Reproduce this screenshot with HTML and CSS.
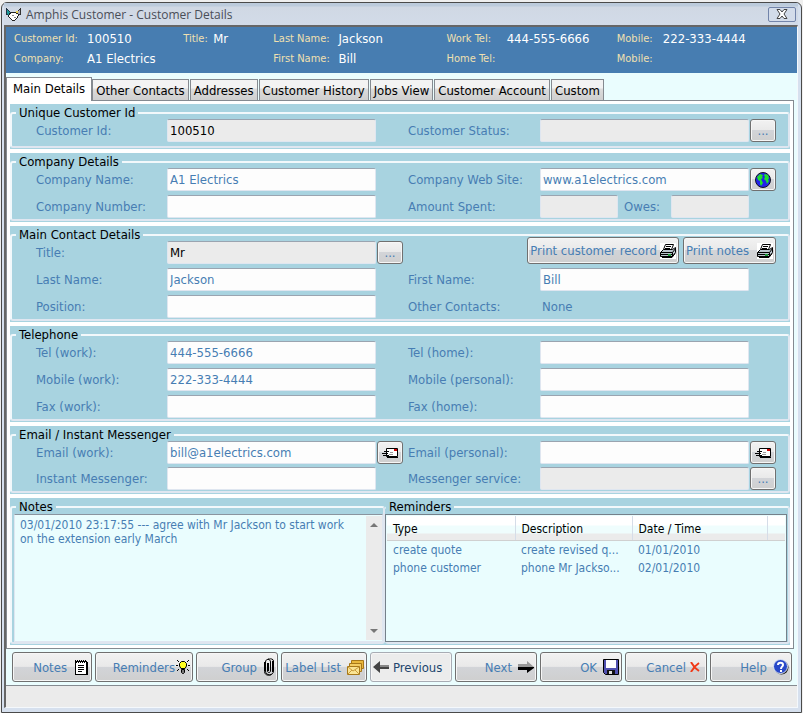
FILE: index.html
```html
<!DOCTYPE html>
<html lang="en">

<head>
    <meta charset="UTF-8">
    <meta name="viewport" content="width=device-width, initial-scale=1.0">
    <title>Amphis Customer - Customer Details</title>
    <link rel="stylesheet" href="styles.css">
</head>

<body>

    <!-- shared icons -->
    <svg class="sprite" aria-hidden="true">
        <symbol id="printer" viewBox="0 0 16 16">
            <path fill="#fff" d="M0 0h16v16H0z" />
            <path fill="#fff" stroke="#000" d="M3.5 6.5l2-5h8l-2 5z" />
            <path stroke="#000" d="M6 3.5h5M5 5.5h5" />
            <path fill="#b9c4cc" stroke="#000" d="M.5 9.5l3-3h9l3-2v5l-3 4h-12z" />
            <path fill="none" stroke="#000" d="M.5 9.5h12l3-4M12.5 9.5v4M1 11.5h11M2 14.5h10l3-4" />
            <path fill="#1d9a3b" d="M8 11h3v2H8z" />
        </symbol>
        <symbol id="mail" viewBox="0 0 16 12">
            <path fill="#fff" stroke="#000" d="M4.5 1.5h11v8h-11z" />
            <path stroke="#000" d="M2 4.5h5M0 6.5h6M1 8.5h6M5 10.5h11" />
            <path stroke="#999" d="M8 5.5h3M7 7.5h4" />
            <path fill="#c00" d="M12 2h3v2h-3z" />
        </symbol>
    </svg>

    <div class="window">
        <div class="titlebar">
            <svg class="logo" width="17" height="14" viewBox="0 0 17 14" shape-rendering="crispEdges">
                <path fill="#1b9a9a" stroke="#234" d="M1.5 1.5l4 4-1 3-3-1z" />
                <path fill="#aab" stroke="#333" d="M15.5 1.5l-4 4 1 3 3-1z" />
                <path fill="#e8cf4a" d="M11 4h2v3h-2z" />
                <path fill="#fff" stroke="#222" d="M4.5 6.5l3-1h3l3 2-1 3-3 3h-2l-4-4z" />
                <path fill="none" stroke="#888" d="M7 8.5h2M9 10.5h2" />
            </svg>
            <span class="title">Amphis Customer - Customer Details</span>
            <button class="close" aria-label="Close">
                <svg width="12" height="10" viewBox="0 0 12 10">
                    <path fill="#fff" stroke="#444" d="M1 .5h3l2 2.5 2-2.5h3L8 5l3 4.5H8L6 7 4 9.5H1L4 5z" />
                </svg>
            </button>
        </div>

        <div class="client">
            <div class="summary">
                <span>Customer Id:</span><b>100510</b>
                <span>Title:</span><b>Mr</b>
                <span>Last Name:</span><b>Jackson</b>
                <span>Work Tel:</span><b>444-555-6666</b>
                <span>Mobile:</span><b>222-333-4444</b>
                <span>Company:</span><b class="wide">A1 Electrics</b>
                <span>First Name:</span><b>Bill</b>
                <span>Home Tel:</span><b></b>
                <span>Mobile:</span><b></b>
            </div>

            <div class="tabs" role="tablist">
                <button class="tab active" role="tab">Main Details</button>
                <button class="tab" role="tab">Other Contacts</button>
                <button class="tab" role="tab">Addresses</button>
                <button class="tab" role="tab">Customer History</button>
                <button class="tab" role="tab">Jobs View</button>
                <button class="tab" role="tab">Customer Account</button>
                <button class="tab" role="tab">Custom</button>
            </div>

            <div class="panel">
                <div class="group single">
                    <fieldset>
                        <legend>Unique Customer Id</legend>
                        <div class="fields">
                            <label for="customerId">Customer Id:</label>
                            <input id="customerId" value="100510" readonly>
                            <label class="right" for="status">Customer Status:</label>
                            <input id="status" readonly>
                            <button class="small" aria-label="Choose status">...</button>
                        </div>
                    </fieldset>
                </div>

                <div class="group">
                    <fieldset>
                        <legend>Company Details</legend>
                        <div class="fields">
                            <label for="companyName">Company Name:</label>
                            <input id="companyName" value="A1 Electrics">
                            <label class="right" for="website">Company Web Site:</label>
                            <input id="website" value="www.a1electrics.com">
                            <button class="small" aria-label="Open web site">
                                <svg width="16" height="16" viewBox="0 0 16 16">
                                    <circle cx="8" cy="8" r="7.5" fill="#2222e8" stroke="#112" />
                                    <path fill="#1ee02c" d="M2 5l3-3 3 1-1 2 1 1-2 1 1 2 1 2-2 3-1-2v-3L3 8zM10 2l3 1 1 3-1 2 1 1-2 3-1-3-2-2 1-2-1-2z" />
                                </svg>
                            </button>
                            <label for="companyNumber">Company Number:</label>
                            <input id="companyNumber">
                            <label class="right" for="spent">Amount Spent:</label>
                            <div class="amounts">
                                <input id="spent" readonly>
                                <label for="owes">Owes:</label>
                                <input id="owes" readonly>
                            </div>
                        </div>
                    </fieldset>
                </div>

                <div class="group">
                    <fieldset>
                        <legend>Main Contact Details</legend>
                        <div class="fields">
                            <label for="contactTitle">Title:</label>
                            <input id="contactTitle" value="Mr" readonly>
                            <button class="small" aria-label="Choose title">...</button>
                            <div class="print">
                                <button>Print customer record <svg width="16" height="16"><use href="#printer" /></svg></button>
                                <button>Print notes <svg width="16" height="16"><use href="#printer" /></svg></button>
                            </div>
                            <label for="lastName">Last Name:</label>
                            <input id="lastName" value="Jackson">
                            <label class="right" for="firstName">First Name:</label>
                            <input id="firstName" value="Bill">
                            <label for="position">Position:</label>
                            <input id="position">
                            <span class="right">Other Contacts:</span>
                            <span class="value">None</span>
                        </div>
                    </fieldset>
                </div>

                <div class="group">
                    <fieldset>
                        <legend>Telephone</legend>
                        <div class="fields">
                            <label for="telWork">Tel (work):</label>
                            <input id="telWork" value="444-555-6666">
                            <label class="right" for="telHome">Tel (home):</label>
                            <input id="telHome">
                            <label for="mobileWork">Mobile (work):</label>
                            <input id="mobileWork" value="222-333-4444">
                            <label class="right" for="mobilePersonal">Mobile (personal):</label>
                            <input id="mobilePersonal">
                            <label for="faxWork">Fax (work):</label>
                            <input id="faxWork">
                            <label class="right" for="faxHome">Fax (home):</label>
                            <input id="faxHome">
                        </div>
                    </fieldset>
                </div>

                <div class="group">
                    <fieldset>
                        <legend>Email / Instant Messenger</legend>
                        <div class="fields tight">
                            <label for="emailWork">Email (work):</label>
                            <input id="emailWork" value="bill@a1electrics.com">
                            <button class="small" aria-label="Send work email"><svg width="16" height="12"><use href="#mail" /></svg></button>
                            <label class="right" for="emailPersonal">Email (personal):</label>
                            <input id="emailPersonal">
                            <button class="small" aria-label="Send personal email"><svg width="16" height="12"><use href="#mail" /></svg></button>
                            <label for="im">Instant Messenger:</label>
                            <input id="im">
                            <label class="right" for="imService">Messenger service:</label>
                            <input id="imService" readonly>
                            <button class="small" aria-label="Choose service">...</button>
                        </div>
                    </fieldset>
                </div>

                <div class="group lower">
                    <fieldset class="notes">
                        <legend><label for="notes">Notes</label></legend>
                        <div class="notes-box">
                            <textarea id="notes">03/01/2010 23:17:55 --- agree with Mr Jackson to start work on the extension early March</textarea>
                            <div class="scrollbar" aria-hidden="true">
                                <svg width="8" height="4" viewBox="0 0 8 4"><path fill="#777" d="M0 4l4-4 4 4z" /></svg>
                                <svg width="8" height="4" viewBox="0 0 8 4"><path fill="#777" d="M0 0h8L4 4z" /></svg>
                            </div>
                        </div>
                    </fieldset>
                    <fieldset class="reminders">
                        <legend>Reminders</legend>
                        <div class="list">
                            <table>
                                <thead>
                                    <tr>
                                        <th class="type">Type</th>
                                        <th class="description">Description</th>
                                        <th class="date">Date / Time</th>
                                        <th></th>
                                    </tr>
                                </thead>
                                <tbody>
                                    <tr>
                                        <td>create quote</td>
                                        <td>create revised q...</td>
                                        <td>01/01/2010</td>
                                        <td></td>
                                    </tr>
                                    <tr>
                                        <td>phone customer</td>
                                        <td>phone Mr Jackso...</td>
                                        <td>02/01/2010</td>
                                        <td></td>
                                    </tr>
                                </tbody>
                            </table>
                        </div>
                    </fieldset>
                </div>
            </div>

            <div class="toolbar">
                <button>Notes
                    <svg width="16" height="16" viewBox="0 0 16 16" shape-rendering="crispEdges">
                        <path fill="#fff" stroke="#000" d="M2.5 2.5h11v13h-11z" />
                        <path stroke="#000" stroke-dasharray="1 1" d="M2 1.5h12M3 3.5h11" />
                        <path stroke="#000" d="M5 6.5h6M5 8.5h6M5 10.5h6M5 12.5h4M14.5 3v13" />
                    </svg>
                </button>
                <button class="remind">Reminders
                    <svg width="14" height="16" viewBox="0 0 14 16">
                        <path fill="#ffff20" stroke="#000" d="M5 9.5L3.5 7V4.5l2-2h3l2 2V7L9 9.5z" />
                        <path fill="#777" stroke="#000" d="M5.5 10.5h3v3l-1 1h-1l-1-1z" />
                        <path fill="none" stroke="#000" d="M0 6.5h2M12 6.5h2M1 1l2 2M13 1l-2 2M1 12l2-2M13 12l-2-2" />
                    </svg>
                </button>
                <button>Group
                    <svg width="12" height="18" viewBox="0 0 12 18">
                        <path fill="none" stroke="#000" d="M4.5 5v8c0 2 3 2 3 0V4c0-3.500-5-3.500-5 0v9c0 5 8 5 8 0V3c0-2-3-2.500-4-2H5" />
                        <path fill="none" stroke="#000" d="M1.5 4v9.500c0 4 5 4.500 7 3M5.500 5v8M9.500 3v11" />
                    </svg>
                </button>
                <button>Label List
                    <svg width="17" height="15" viewBox="0 0 17 15">
                        <path fill="#e9b83c" stroke="#a87818" d="M4.5.5h12v8h-12z" />
                        <path fill="#f4cd63" stroke="#a87818" d="M2.5 3.5h12v8h-12z" />
                        <path fill="#fbe493" stroke="#a87818" d="M.5 6.5h12v8H.5z" />
                        <path fill="none" stroke="#c89a3a" d="M1 7l5 4 6-4M1 14l4-4M12 14l-4-4" />
                    </svg>
                </button>
                <button class="previous">
                    <svg width="16" height="14" viewBox="0 0 16 14">
                        <path fill="#444" d="M0 7l7-6v4h9v4H7v4z" />
                        <path fill="#888" d="M7 5h9v2H7z" />
                    </svg>
                    Previous
                </button>
                <button>Next
                    <svg width="16" height="14" viewBox="0 0 16 14">
                        <path fill="#999" d="M0 4h9V1l7 6H0z" />
                        <path fill="#000" d="M16 8l-7 5v-3H0V7h16z" />
                    </svg>
                </button>
                <button>OK
                    <svg width="16" height="16" viewBox="0 0 16 16">
                        <path fill="#5050b0" stroke="#000" d="M.5.5h15v15H2.5l-2-2z" />
                        <path fill="#fff" d="M3 1h10v8H3z" />
                        <path fill="#111" d="M4 11h8v4H4z" />
                        <path fill="#ddd" d="M6 12h3v3H6z" />
                    </svg>
                </button>
                <button>Cancel
                    <svg class="cross" width="10" height="10" viewBox="0 0 10 10">
                        <path fill="none" stroke="#f03a18" stroke-width="2" d="M1 0c2 4 5 7 8 9M9 1C6 3 3 6 1 10" />
                    </svg>
                </button>
                <button>Help
                    <svg width="16" height="16" viewBox="0 0 16 16">
                        <circle cx="8.5" cy="8.5" r="7" fill="#222" />
                        <circle cx="7.5" cy="7.5" r="7" fill="#2848c8" stroke="#dde6f6" />
                        <path fill="none" stroke="#fff" stroke-width="2" d="M5 6c0-3 5-3 5 0 0 2-2 1-2 4M8 11v2" />
                    </svg>
                </button>
            </div>

            <div class="statusbar"></div>
        </div>
    </div>

</body>

</html>
```
FILE: styles.css
```css
* {
    box-sizing: border-box;
}

body {
    margin: 0;
    padding: 2px 1px 1px;
    background-color: #efefef;
    font-family: "DejaVu Sans Condensed", "DejaVu Sans", sans-serif;
    font-size: 13px;
    color: #477db3;
}

button,
input,
textarea {
    font: inherit;
    color: inherit;
}

.sprite {
    display: none;
}

.window {
    border: 1px solid #4a4a4a;
    border-radius: 6px 6px 0 0;
    background-color: #d6e0ee;
    padding: 0 3px 4px 2px;
}

.titlebar {
    display: flex;
    align-items: center;
    height: 22px;
    padding: 0 2px 0 1px;
    background: linear-gradient(#bccbdc 3px, #d0d8e4 4px, #d2dbe8);
}

.title {
    flex: 1;
    margin-left: 4px;
    font-family: "Open Sans", sans-serif;
    font-size: 12px;
    color: #4a4e58;
}

.close {
    display: flex;
    align-items: center;
    justify-content: center;
    width: 28px;
    height: 15px;
    padding: 0;
    border: 1px solid #7284aa;
    border-radius: 2px;
    background-color: #d3dcea;
}

.client {
    border: 1px solid #666;
    border-width: 2px 1px 1px 2px;
    border-right-color: #f4f8fc;
    border-bottom-color: #f4f8fc;
    background-color: #eafdfe;
}

.summary {
    display: grid;
    grid-template-columns: 73fr 96fr 30fr 60fr 65fr 108fr 60fr 110fr 46fr 134fr;
    grid-auto-rows: 20px;
    align-items: center;
    height: 46px;
    padding: 1px 0 0 8px;
    background-color: #477db1;
    white-space: nowrap;
}

.summary span {
    font-size: 11px;
    color: #f0e0b0;
}

.summary b {
    font-weight: normal;
    color: #fff;
}

.summary .wide {
    grid-column: span 3;
}

.tabs {
    display: flex;
    align-items: flex-end;
    height: 27px;
}

.tab {
    height: 21px;
    padding: 0 3px;
    margin-right: 1px;
    border: 1px solid #858a90;
    border-bottom: none;
    background: linear-gradient(#f3f3f3 8px, #dcdcdc 9px, #cfcfcf);
    color: #000;
}

.tab.active {
    height: 24px;
    margin: 0 0 -1px;
    padding: 0 6px 2px;
    background: #fff;
    z-index: 1;
}

.panel {
    display: flex;
    flex-direction: column;
    gap: 4px;
    margin-right: 3px;
    padding: 3px;
    border: 1px solid #858a90;
    background-color: #fff;
}

.group {
    padding: 1px 0;
    background-color: #a8d3e0;
}

fieldset {
    min-width: 0;
    margin: 0;
    padding: 0;
    border: 2px solid;
    border-color: #f2f8fb #dfe6f0 #dfe6f0 #f2f8fb;
    border-radius: 3px;
}

legend {
    height: 16px;
    margin-left: 4px;
    padding: 0 3px;
    line-height: 16px;
    color: #000;
}

.fields {
    display: grid;
    grid-template-columns: 131px 1fr 32px 132px 1fr 27px;
    grid-auto-rows: 23px;
    row-gap: 4px;
    align-items: center;
    margin-top: -2px;
    padding: 0 12px 1px 24px;
}

.fields.tight {
    row-gap: 3px;
}

.single .fields {
    padding-bottom: 4px;
}

.fields .right {
    grid-column: 4;
}

.fields > label:not(.right) {
    grid-column: 1;
}

.value {
    padding-left: 2px;
}

input {
    width: 100%;
    min-width: 0;
    height: 23px;
    padding: 0 2px 1px;
    border: 1px solid #dfe6f0;
    border-top-color: #9aa4b0;
    border-radius: 2px;
    background-color: #fdfdfd;
    outline: none;
}

input:read-only {
    background-color: #ebebeb;
}

#customerId,
#contactTitle {
    color: #000;
}

.small,
.print button,
.toolbar button {
    display: flex;
    align-items: center;
    border: 1px solid #707070;
    border-radius: 3px;
    background: linear-gradient(#f2f2f2, #e9e9e9 48%, #d2d4d8 50%, #cfcfcf);
    box-shadow: inset 0 0 0 1px #f6f6f6;
    white-space: nowrap;
}

.small {
    justify-content: center;
    width: 26px;
    height: 23px;
    margin-left: 1px;
    padding: 0;
}

.amounts {
    display: grid;
    grid-template-columns: 1fr 53px 1fr;
    align-items: center;
}

.amounts label {
    padding-left: 6px;
}

.print {
    grid-column: 4 / 7;
    align-self: end;
    display: flex;
    justify-content: flex-end;
    gap: 4px;
}

.print button {
    height: 27px;
    gap: 3px;
    padding: 0 2px;
}

.print button:last-child {
    gap: 8px;
}

.lower {
    display: grid;
    grid-template-columns: 375px 1fr;
}

.reminders {
    border-left: none;
}

.reminders legend {
    margin-left: 1px;
}

.notes-box {
    display: flex;
    height: 128px;
    margin: -1px 0 0 2px;
    border: 1px solid #dfe6f0;
    border-top-color: #8a949e;
    background-color: #eafdfe;
}

textarea {
    flex: 1;
    min-width: 0;
    padding: 3px 12px 3px 5px;
    border: none;
    background-color: transparent;
    font-size: 12px;
    line-height: 14px;
    resize: none;
    outline: none;
}

.scrollbar {
    display: flex;
    flex-direction: column;
    align-items: center;
    justify-content: space-between;
    width: 16px;
    margin: 1px 0;
    padding: 7px 0;
    background-color: #ebebeb;
}

.list {
    height: 128px;
    margin: -1px 1px 0 0;
    padding: 1px;
    border: 1px solid #75808a;
    background-color: #eafdfe;
    font-size: 12px;
}

table {
    width: 100%;
    table-layout: fixed;
    border-collapse: collapse;
}

th {
    height: 24px;
    padding: 2px 6px 0;
    border-right: 1px solid #d5dde8;
    border-bottom: 1px solid #d0d0d0;
    background: linear-gradient(#fff 9px, #effdfd 10px, #effdfd 17px, #ebebeb 18px);
    font-weight: normal;
    text-align: left;
    color: #000;
}

th:last-child {
    border-right: none;
}

.type {
    width: 128px;
}

.description {
    width: 117px;
}

.date {
    width: 135px;
}

td {
    height: 18px;
    padding: 2px 6px 0;
    white-space: nowrap;
}

.toolbar {
    display: grid;
    grid-template-columns: 80fr 98fr 82fr 86fr 82fr 82fr 82fr 82fr 82fr;
    gap: 3px;
    padding: 3px 5px 3px 6px;
}

.toolbar button {
    justify-content: flex-end;
    gap: 6px;
    height: 30px;
    padding: 0 2px;
}

.toolbar button.remind {
    gap: 1px;
}

.toolbar button.previous {
    justify-content: flex-start;
    gap: 4px;
    border-color: #a8acb4;
    background: #ececec;
    color: #22466e;
}

.toolbar .cross {
    margin: 0 4px 0 -2px;
}

.statusbar {
    height: 22px;
    border-top: 1px solid #858a90;
    background-color: #ebebeb;
}
```
